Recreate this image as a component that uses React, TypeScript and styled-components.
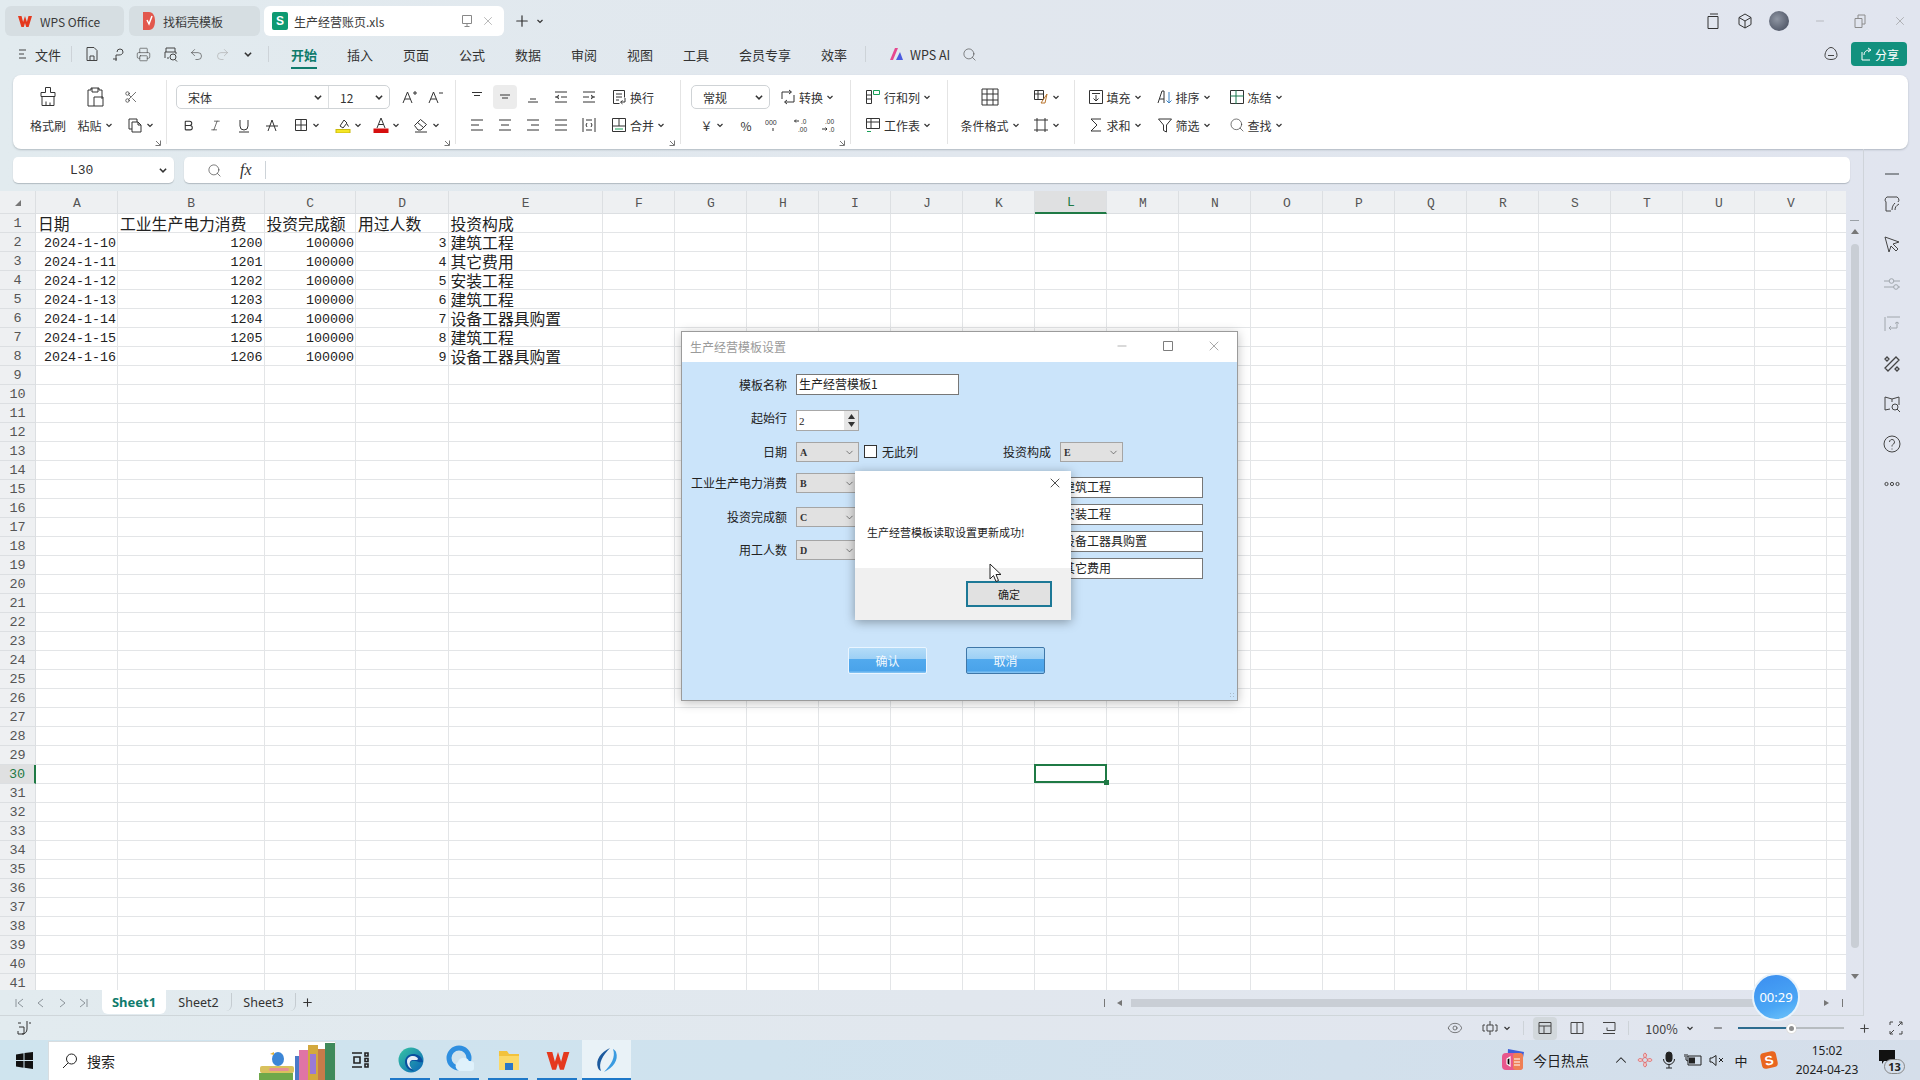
import React from "react";
import styled, { createGlobalStyle } from "styled-components";
import {
  Bold, ChevronDown, ChevronUp, Eye, Italic, Minus, Plus, Printer, Redo2, Scissors, Search, Undo2, X,
} from "lucide-react";

const UI = `"Noto Sans CJK SC", "Noto Sans", sans-serif`;
const MONO = `"Liberation Mono", "Noto Sans CJK SC", monospace`;

const Global = createGlobalStyle`
  html, body { margin: 0; padding: 0; overflow: hidden; }
  * { box-sizing: border-box; }
`;

const Svg = ({ w = 16, h = 16, vb, color, sw = 1, children }: { w?: number; h?: number; vb?: string; color?: string; sw?: number; children: React.ReactNode }) => (
  <svg width={w} height={h} viewBox={vb || `0 0 ${w} ${h}`} fill="none" stroke={color || "currentColor"} strokeWidth={sw} style={{ flex: "none", display: "block" }}>
    {children}
  </svg>
);

const Chev = ({ size = 8 }: { size?: number }) => (
  <svg width={size} height={size} viewBox="0 0 8 8" fill="none" stroke="#333" strokeWidth="1.2" style={{ flex: "none" }}>
    <path d="M1.5 3l2.5 2.5L6.5 3" />
  </svg>
);

const Page = styled.div`
  position: relative;
  width: 1920px;
  height: 1080px;
  overflow: hidden;
  display: flex;
  flex-direction: column;
  font-family: ${UI};
  color: #333;
  background: linear-gradient(90deg, #e2ebef 0%, #e1e7ee 50%, #e1e5ef 100%);
`;

/* title tabs */
const TabBar = styled.div`
  height: 37px;
  padding: 6px 0 0 5px;
  display: flex;
  align-items: flex-start;
  flex: none;
`;
const DocTab = styled.div<{ $w: number; $active?: boolean; $gap?: number; $pl?: number }>`
  width: ${(p) => p.$w}px;
  height: 30px;
  margin-right: ${(p) => p.$gap ?? 5}px;
  border-radius: 6px;
  background: ${(p) => (p.$active ? "#ffffff" : "#d6dee2")};
  display: flex;
  align-items: center;
  padding-left: ${(p) => p.$pl ?? 12}px;
  gap: 7px;
  font-size: 12px;
  color: #3a3a3a;
`;
const SheetLogo = styled.span`
  width: 16px;
  height: 18px;
  margin-right: -1px;
  border-radius: 2px;
  background: #0d9a72;
  color: #fff;
  font: bold 12px "Liberation Sans", sans-serif;
  display: flex;
  align-items: center;
  justify-content: center;
`;
const TabEnd = styled.span`
  margin-left: auto;
  margin-right: 9px;
  display: flex;
  align-items: center;
  gap: 7px;
  color: #888;
`;
const NewTab = styled.div`
  height: 30px;
  display: flex;
  align-items: center;
  gap: 5px;
  margin-left: 4px;
  color: #333;
`;
const WinControls = styled.div`
  margin-left: auto;
  height: 30px;
  display: flex;
  align-items: center;
  color: #333;
`;
const WinSlot = styled.span<{ $w: number; $dim?: boolean }>`
  width: ${(p) => p.$w}px;
  display: flex;
  justify-content: center;
  color: ${(p) => (p.$dim ? "#8c8c8c" : "#333")};
`;
const Avatar = styled.span`
  width: 20px;
  height: 20px;
  border-radius: 50%;
  background: radial-gradient(circle at 40% 40%, #8f96a3, #575e6e 70%);
`;

/* menu row */
const MenuRow = styled.div`
  height: 38px;
  display: flex;
  align-items: center;
  padding: 0 13px 4px 16px;
  font-size: 13px;
  flex: none;
`;
const MenuIcon = styled.span<{ $w: number; $ml?: string; $dim?: boolean }>`
  width: ${(p) => p.$w}px;
  margin-left: ${(p) => p.$ml ?? "0"};
  display: flex;
  justify-content: center;
  align-items: center;
  color: ${(p) => (p.$dim ? "#aaa" : "#444")};
`;
const FileLabel = styled.span`
  margin: 0 10px 0 5px;
`;
const VLine = styled.span<{ $h?: number; $ml?: number; $mr?: number }>`
  width: 1px;
  height: ${(p) => p.$h ?? 16}px;
  margin: 0 ${(p) => p.$mr ?? 0}px 0 ${(p) => p.$ml ?? 0}px;
  background: #cdd3d8;
  flex: none;
`;
const MenuTab = styled.span<{ $w?: number; $active?: boolean }>`
  width: ${(p) => p.$w ?? 56}px;
  height: 34px;
  display: flex;
  align-items: center;
  justify-content: center;
  position: relative;
  color: ${(p) => (p.$active ? "#0f7b6c" : "#333")};
  font-weight: ${(p) => (p.$active ? 700 : 400)};
  &::after {
    content: "";
    display: ${(p) => (p.$active ? "block" : "none")};
    position: absolute;
    bottom: 2px;
    left: 15px;
    width: 26px;
    height: 2px;
    background: #0f7b6c;
  }
`;
const AiLabel = styled.span`
  font-size: 12.5px;
  margin-left: 5px;
`;
const ShareBtn = styled.span`
  margin-left: 12px;
  width: 56px;
  height: 24px;
  border-radius: 4px;
  background: #12917e;
  color: #fff;
  font-size: 12px;
  display: flex;
  align-items: center;
  justify-content: center;
  gap: 2px;
`;

/* ribbon */
const Ribbon = styled.div`
  margin: 0 12px 0 13px;
  height: 74px;
  flex: none;
  display: flex;
  background: #fff;
  border-radius: 8px;
  box-shadow: 0 1px 2px rgba(90, 100, 110, 0.35);
  font-size: 12px;
`;
const Group = styled.div<{ $w: number; $pl?: number; $last?: boolean }>`
  position: relative;
  width: ${(p) => p.$w}px;
  flex: none;
  padding: 10px 0 0 ${(p) => p.$pl ?? 0}px;
  display: flex;
  flex-direction: column;
  gap: 4px;
  &::after {
    content: "";
    display: ${(p) => (p.$last ? "none" : "block")};
    position: absolute;
    right: 0;
    top: 5px;
    bottom: 5px;
    width: 1px;
    background: #e4e4e4;
  }
`;
const RRow = styled.div`
  height: 24px;
  display: flex;
  align-items: center;
`;
const Slot = styled.span<{ $w: number; $start?: number }>`
  width: ${(p) => p.$w}px;
  height: 24px;
  flex: none;
  display: flex;
  align-items: center;
  justify-content: ${(p) => (p.$start !== undefined ? "flex-start" : "center")};
  padding-left: ${(p) => p.$start ?? 0}px;
  gap: 3px;
  white-space: nowrap;
  color: #333;
`;
const ActiveBox = styled.span`
  width: 24px;
  height: 24px;
  background: #ececec;
  border-radius: 4px;
  display: flex;
  align-items: center;
  justify-content: center;
`;
const Combo = styled.div<{ $w: number }>`
  width: ${(p) => p.$w}px;
  height: 24px;
  flex: none;
  border: 1px solid #cfd3d6;
  border-radius: 5px;
  display: flex;
  align-items: center;
`;
const ComboPart = styled.span<{ $w: number; $line?: boolean }>`
  width: ${(p) => p.$w}px;
  height: 22px;
  display: flex;
  align-items: center;
  justify-content: space-between;
  padding: 0 5px 0 11px;
  border-right: ${(p) => (p.$line ? "1px solid #dcdfe1" : "none")};
`;
const Corner = styled.span`
  position: absolute;
  right: 6px;
  bottom: 3px;
  color: #777;
`;

/* formula */
const Workspace = styled.div`
  flex: 1;
  min-height: 0;
  display: flex;
`;
const Center = styled.div`
  width: 1863px;
  display: flex;
  flex-direction: column;
  padding-top: 8px;
`;
const Side = styled.div`
  width: 57px;
  border-left: 1px solid #cfd4da;
  display: flex;
  flex-direction: column;
  align-items: center;
  padding-top: 17px;
  gap: 22px;
  color: #444;
`;
const SideDash = styled.span`
  width: 14px;
  height: 1.5px;
  margin: 7px 0 -2px;
  background: #8d9298;
`;
const FormulaRow = styled.div`
  height: 26px;
  flex: none;
  display: flex;
  gap: 10px;
  padding: 0 13px;
`;
const NameBox = styled.div`
  width: 161px;
  background: #fff;
  border-radius: 5px;
  box-shadow: 0 1px 1px rgba(90, 100, 110, 0.35);
  font: 13px ${MONO};
  display: flex;
  align-items: center;
  padding: 0 6px 0 57px;
  justify-content: space-between;
`;
const FormulaInput = styled.div`
  flex: 1;
  background: #fff;
  border-radius: 5px;
  box-shadow: 0 1px 1px rgba(90, 100, 110, 0.35);
  display: flex;
  align-items: center;
  padding-left: 23px;
  gap: 14px;
`;
const Fx = styled.span`
  width: 18px;
  margin: 0 -7px 0 4px;
  font: italic 16px "Liberation Serif", serif;
  color: #333;
`;

/* sheet */
const SheetArea = styled.div`
  flex: 1;
  min-height: 0;
  margin-top: 8px;
  display: flex;
`;
const GridClip = styled.div`
  width: 1846px;
  overflow: hidden;
  background: #fff;
`;
const Grid = styled.div`
  display: grid;
  grid-template-columns: 36px 82px 146.5px 91.5px 92.5px 154.5px repeat(18, 72px);
  grid-template-rows: 23px repeat(41, 19px);
  width: max-content;
`;
const Corner0 = styled.div`
  background: #eef0f2;
  border-right: 1px solid #dcdfe2;
  border-bottom: 1px solid #dcdfe2;
  display: flex;
  align-items: center;
  justify-content: center;
  padding-top: 2px;
  color: #777;
`;
const ColHead = styled.div<{ $on?: boolean }>`
  background: ${(p) => (p.$on ? "#dfe0e1" : "#eef0f2")};
  border-right: 1px solid #dcdfe2;
  border-bottom: ${(p) => (p.$on ? "2px solid #1f7a45" : "1px solid #dcdfe2")};
  color: ${(p) => (p.$on ? "#1f7a45" : "#555")};
  font: 13px ${MONO};
  display: flex;
  align-items: center;
  justify-content: center;
  padding: 2px 0 0 1px;
`;
const RowHead = styled.div<{ $on?: boolean }>`
  background: ${(p) => (p.$on ? "#dfe0e1" : "#eef0f2")};
  border-right: ${(p) => (p.$on ? "2px solid #1f7a45" : "1px solid #dcdfe2")};
  border-bottom: 1px solid #dcdfe2;
  color: ${(p) => (p.$on ? "#1f7a45" : "#555")};
  font: 13.5px/16px ${MONO};
  display: flex;
  align-items: center;
  justify-content: center;
  padding-top: 2px;
`;
const Cell = styled.div<{ $num?: boolean; $sel?: boolean }>`
  position: relative;
  border-right: 1px solid #e3e5e7;
  border-bottom: 1px solid #e3e5e7;
  padding: ${(p) => (p.$num ? "3px 1px 0 1px" : "1px 1px 0 2px")};
  white-space: nowrap;
  color: #222;
  text-align: ${(p) => (p.$num ? "right" : "left")};
  font: ${(p) => (p.$num ? `13.33px/15px ${MONO}` : `15.8px/17px ${UI}`)};
  &::after {
    content: "";
    display: ${(p) => (p.$sel ? "block" : "none")};
    position: absolute;
    inset: -1px -1px 0 -1px;
    border: 2px solid #1f7a45;
  }
  &::before {
    content: "";
    display: ${(p) => (p.$sel ? "block" : "none")};
    position: absolute;
    right: -3px;
    bottom: -2px;
    width: 5px;
    height: 5px;
    background: #1f7a45;
    z-index: 1;
  }
`;
const VScroll = styled.div`
  width: 17px;
  display: flex;
  flex-direction: column;
  align-items: center;
  color: #777;
  padding-top: 8px;
`;
const ScrollDash = styled.span`
  width: 9px;
  height: 1px;
  background: #9aa0a6;
  margin: 21px 0 8px;
`;
const ScrollThumb = styled.span`
  width: 8px;
  height: 704px;
  margin-top: 10px;
  border-radius: 4px;
  background: #c9ced5;
`;
const ArrowUp = styled.span`
  width: 0;
  height: 0;
  border: 4px solid transparent;
  border-top: 0;
  border-bottom: 5px solid #777;
`;
const ArrowDown = styled.span`
  width: 0;
  height: 0;
  margin-top: 26px;
  border: 4px solid transparent;
  border-bottom: 0;
  border-top: 5px solid #777;
`;

/* sheet tabs */
const TabsRow = styled.div`
  height: 26px;
  flex: none;
  border-bottom: 1px solid #cfd6da;
  display: flex;
  align-items: flex-start;
  font-size: 12px;
`;
const NavSet = styled.div`
  width: 102px;
  height: 25px;
  padding-left: 14px;
  display: flex;
  align-items: center;
  gap: 9px;
  color: #8c949a;
`;
const SheetTab = styled.span<{ $w: number; $active?: boolean }>`
  width: ${(p) => p.$w}px;
  height: ${(p) => (p.$active ? 24 : 18)}px;
  margin-top: ${(p) => (p.$active ? 0 : 3)}px;
  display: flex;
  align-items: center;
  justify-content: center;
  background: ${(p) => (p.$active ? "#fff" : "transparent")};
  border-radius: 0 0 6px 6px;
  border-right: ${(p) => (p.$active ? "none" : "1px solid #c5ccd1")};
  color: ${(p) => (p.$active ? "#0f7b6c" : "#333")};
  font: ${(p) => (p.$active ? "bold 13px" : "12.5px")} "Noto Sans", sans-serif;
`;
const AddSheet = styled.span`
  margin: 5px 0 0 5px;
  color: #333;
`;
const HScroll = styled.div`
  margin-left: auto;
  height: 25px;
  display: flex;
  align-items: center;
  color: #777;
`;
const ArrowSide = styled.span<{ $left?: boolean }>`
  width: 0;
  height: 0;
  border: 3.5px solid transparent;
  ${(p) => (p.$left ? "border-left: 0; border-right: 5px solid #777;" : "border-right: 0; border-left: 5px solid #777;")}
`;
const HTrack = styled.span`
  width: 637px;
  height: 8px;
  margin: 0 56px 0 9px;
  background: #c9ced5;
  border-radius: 0 4px 4px 0;
`;
const HEnd = styled.span<{ $ml: number; $mr: number }>`
  width: 1px;
  height: 8px;
  margin: 0 ${(p) => p.$mr}px 0 ${(p) => p.$ml}px;
  background: #777;
`;

/* status */
const StatusBar = styled.div`
  height: 24px;
  flex: none;
  padding: 0 12px 0 16px;
  display: flex;
  align-items: center;
  font-size: 12.5px;
`;
const StatusSlot = styled.span<{ $w: number; $ml?: string; $pl?: number; $gap?: number }>`
  width: ${(p) => p.$w}px;
  height: 24px;
  flex: none;
  margin-left: ${(p) => p.$ml ?? "0"};
  padding-left: ${(p) => p.$pl ?? 0}px;
  display: flex;
  align-items: center;
  justify-content: center;
  gap: ${(p) => p.$gap ?? 5}px;
  color: #444;
`;
const ViewBox = styled.span<{ $on?: boolean }>`
  width: 24px;
  height: 23px;
  border-radius: 4px;
  background: ${(p) => (p.$on ? "#d2d8dc" : "transparent")};
  display: flex;
  align-items: center;
  justify-content: center;
`;
const ZoomSlider = styled.span`
  width: 106px;
  margin-left: 9px;
  display: flex;
  align-items: center;
`;
const ZoomFill = styled.span`
  width: 49px;
  height: 2px;
  background: #2d6c8f;
`;
const ZoomThumb = styled.span`
  width: 9px;
  height: 9px;
  border-radius: 50%;
  background: #8d8d8d;
  border: 2px solid #fff;
  box-shadow: 0 0 0 1px #e0e0e0;
  flex: none;
`;
const ZoomRest = styled.span`
  flex: 1;
  height: 2px;
  background: #b7bcc0;
`;

/* taskbar */
const Taskbar = styled.div`
  height: 40px;
  flex: none;
  display: flex;
  align-items: center;
  background: linear-gradient(90deg, #cfe4ee 0%, #cfe2ee 40%, #d5deea 100%);
  color: #222;
`;
const StartSlot = styled.span`
  width: 48px;
  display: flex;
  justify-content: center;
`;
const SearchBox = styled.div`
  width: 288px;
  height: 39px;
  margin-top: 1px;
  background: #fff;
  border: 1px solid #d8dde0;
  border-bottom: 0;
  display: flex;
  align-items: center;
  padding-left: 12px;
  gap: 8px;
  font-size: 14px;
`;
const BooksWrap = styled.span`
  margin-left: auto;
  display: flex;
  align-self: flex-end;
`;
const TaskSlot = styled.span<{ $w?: number; $run?: boolean; $on?: boolean; $ml?: number }>`
  position: relative;
  width: ${(p) => p.$w ?? 49}px;
  height: 40px;
  flex: none;
  margin-left: ${(p) => p.$ml ?? 0}px;
  display: flex;
  align-items: center;
  justify-content: center;
  background: ${(p) => (p.$on ? "rgba(255,255,255,0.55)" : "transparent")};
  &::after {
    content: "";
    display: ${(p) => (p.$run ? "block" : "none")};
    position: absolute;
    bottom: 0;
    left: ${(p) => (p.$on ? 0 : 4)}px;
    right: ${(p) => (p.$on ? 0 : 5)}px;
    height: 2px;
    background: #1f78c8;
  }
`;
const TrayArea = styled.div`
  margin-left: auto;
  padding-right: 6px;
  display: flex;
  align-items: center;
`;
const NewsText = styled.span`
  font-size: 14px;
  margin: 0 20px 0 8px;
`;
const TraySlot = styled.span<{ $gap?: number }>`
  width: 24px;
  margin-left: ${(p) => p.$gap ?? 0}px;
  display: flex;
  justify-content: center;
  align-items: center;
  color: #222;
`;
const ImeText = styled.span`
  font-size: 13px;
`;
const SogouS = styled.span`
  width: 16px;
  height: 16px;
  border-radius: 4px;
  background: #e9661f;
  color: #fff;
  font: bold 13px "Liberation Sans", sans-serif;
  display: flex;
  align-items: center;
  justify-content: center;
  transform: rotate(-12deg);
`;
const Clock = styled.div`
  width: 66px;
  margin-left: 13px;
  text-align: center;
  font: 12px/19px "Noto Sans", sans-serif;
  color: #222;
`;
const NotifySlot = styled.span`
  position: relative;
  width: 54px;
  height: 40px;
  display: flex;
  justify-content: center;
  padding-top: 10px;
`;
const NotifyBadge = styled.span`
  position: absolute;
  left: 24px;
  top: 19px;
  width: 21px;
  height: 15px;
  border-radius: 8px;
  border: 1px solid #888;
  background: #d5deea;
  font: bold 11px/13px "Noto Sans", sans-serif;
  text-align: center;
  color: #222;
`;

/* dialog */
const Dialog = styled.div`
  position: absolute;
  left: 681px;
  top: 331px;
  width: 557px;
  height: 370px;
  border: 1px solid #9b9b9b;
  box-shadow: 0 2px 10px rgba(0, 0, 0, 0.25);
  display: flex;
  flex-direction: column;
`;
const DlgTitle = styled.div`
  height: 30px;
  flex: none;
  background: #fff;
  display: flex;
  align-items: center;
  padding: 0 0 2px 8px;
  font-size: 12px;
  color: #9a9a9a;
`;
const DlgControls = styled.span`
  margin-left: auto;
  display: flex;
  align-items: center;
  color: #7d7d7d;
`;
const DlgControl = styled.span`
  width: 46px;
  display: flex;
  justify-content: center;
`;
const DlgBody = styled.div`
  position: relative;
  flex: 1;
  background: #cbe4fa;
  padding-top: 12px;
  font-size: 12px;
  color: #222;
`;
const FormRow = styled.div<{ $h: number }>`
  height: ${(p) => p.$h}px;
  display: flex;
  align-items: flex-start;
`;
const FieldLabel = styled.span<{ $w?: number; $dy?: number }>`
  width: ${(p) => p.$w ?? 105}px;
  flex: none;
  height: 20px;
  margin-top: ${(p) => p.$dy ?? 0}px;
  line-height: 20px;
  text-align: right;
  margin-right: 9px;
  white-space: nowrap;
`;
const TextBox = styled.div<{ $w: number }>`
  width: ${(p) => p.$w}px;
  height: 21px;
  background: #fff;
  border: 1px solid #777;
  padding: 0 2px;
  font-size: 12px;
  line-height: 17px;
  white-space: nowrap;
  overflow: hidden;
`;
const SpinBox = styled.div`
  width: 63px;
  height: 21px;
  background: #fff;
  border: 1px solid #a8a8a8;
  display: flex;
  align-items: center;
  justify-content: space-between;
  padding-left: 2px;
  font: 11px "Liberation Serif", serif;
`;
const SpinBtns = styled.span`
  width: 14px;
  height: 19px;
  background: #e6e6e6;
  display: flex;
  flex-direction: column;
  align-items: center;
  justify-content: space-around;
  padding: 2px 0;
`;
const Drop = styled.div`
  width: 63px;
  height: 20px;
  background: #e1e1e1;
  border: 1px solid #a5a5a5;
  display: flex;
  align-items: center;
  justify-content: space-between;
  padding: 0 3px 0 3px;
  font: bold 10px "Liberation Serif", serif;
  color: #333;
`;
const Check = styled.span`
  width: 13px;
  height: 13px;
  margin: 3px 5px 0 5px;
  background: #fff;
  border: 1px solid #333;
  flex: none;
`;
const CheckText = styled.span`
  line-height: 20px;
`;
const Columns = styled.div`
  display: flex;
`;
const ColLeft = styled.div`
  width: 320px;
`;
const ColRight = styled.div`
  flex: 1;
`;
const OptionStack = styled.div`
  margin-top: 15px;
  padding-right: 34px;
  display: flex;
  flex-direction: column;
  align-items: flex-end;
  gap: 6px;
`;
const DlgButtons = styled.div`
  margin: 68px 0 0 166px;
  display: flex;
  gap: 39px;
`;
const BlueBtn = styled.div<{ $light?: boolean }>`
  width: 79px;
  height: 27px;
  border: 1px solid ${(p) => (p.$light ? "#eaf5ff" : "#3f77a8")};
  border-radius: 2px;
  background: linear-gradient(180deg, #b4dcf8 0%, #9dd0f5 42%, #52aaee 44%, #4aa3ea 90%, #8cc8f4 100%);
  color: #f2f8fd;
  font-size: 12px;
  display: flex;
  align-items: center;
  justify-content: center;
`;
const Grip = styled.span`
  position: absolute;
  right: 1px;
  bottom: 1px;
  width: 7px;
  height: 7px;
  opacity: 0.7;
  background: radial-gradient(circle, #9aa9b6 0.8px, transparent 1px) 0 0 / 3px 3px;
`;
const MsgBox = styled.div`
  position: absolute;
  left: 173px;
  top: 109px;
  width: 216px;
  height: 149px;
  background: #fff;
  box-shadow: 0 2px 10px rgba(0, 0, 0, 0.35);
  display: flex;
  flex-direction: column;
`;
const MsgClose = styled.span`
  position: absolute;
  right: 8px;
  top: 4px;
  color: #222;
`;
const MsgText = styled.div`
  height: 97px;
  flex: none;
  padding: 53px 0 0 12px;
  font-size: 11px;
  line-height: 16px;
  white-space: nowrap;
`;
const MsgFoot = styled.div`
  flex: 1;
  background: #f0f0f0;
  display: flex;
  justify-content: flex-end;
  padding: 13px 19px 0 0;
`;
const MsgOk = styled.div`
  width: 86px;
  height: 26px;
  border: 2px solid #1c7896;
  background: #e1e1e1;
  font-size: 11px;
  display: flex;
  align-items: center;
  justify-content: center;
`;
const Pointer = styled.span`
  position: absolute;
  left: 134px;
  top: 92px;
`;
const Timer = styled.div`
  position: absolute;
  left: 1752px;
  top: 973px;
  width: 48px;
  height: 48px;
  border-radius: 50%;
  border: 2px solid #e9f3fb;
  background: linear-gradient(160deg, #3b8ef0 0%, #4aa6f5 65%, #6fc5fa 100%);
  color: #fff;
  font: 13px "Noto Sans", sans-serif;
  display: flex;
  align-items: center;
  justify-content: center;
`;

const COLS = "ABCDEFGHIJKLMNOPQRSTUVW".split("");
const ROWS = [
  ["日期", "工业生产电力消费", "投资完成额", "用过人数", "投资构成"],
  ["2024-1-10", "1200", "100000", "3", "建筑工程"],
  ["2024-1-11", "1201", "100000", "4", "其它费用"],
  ["2024-1-12", "1202", "100000", "5", "安装工程"],
  ["2024-1-13", "1203", "100000", "6", "建筑工程"],
  ["2024-1-14", "1204", "100000", "7", "设备工器具购置"],
  ["2024-1-15", "1205", "100000", "8", "建筑工程"],
  ["2024-1-16", "1206", "100000", "9", "设备工器具购置"],
];

const WpsW = ({ s = 16 }: { s?: number }) => (
  <svg width={s} height={s} viewBox="0 0 16 16" style={{ flex: "none" }}>
    <path d="M1 3h3.5l1.6 6L8 3l1.9 6 1.6-6H15l-3.4 11H9.2L8 10l-1.2 4H4.4z" fill="#e5391e" />
  </svg>
);

const CornerMark = () => (
  <Corner><Svg w={6} h={6}><path d="M5.5 0.5v5h-5M1 1l4 4" /></Svg></Corner>
);

const SheetGrid = () => {
  const cells: React.ReactNode[] = [];
  cells.push(
    <Corner0 key="c">
      <svg width="8" height="8" viewBox="0 0 8 8"><path d="M7 1v6H1z" fill="#777" /></svg>
    </Corner0>
  );
  COLS.forEach((c) => cells.push(<ColHead key={c} $on={c === "L"}>{c === "W" ? "" : c}</ColHead>));
  for (let r = 1; r <= 41; r++) {
    cells.push(<RowHead key={"r" + r} $on={r === 30}>{r}</RowHead>);
    COLS.forEach((c, i) => {
      const v = ROWS[r - 1]?.[i];
      const num = !!v && r > 1 && i < 4;
      cells.push(
        <Cell key={c + r} $num={num} $sel={c === "L" && r === 30}>
          {v}
        </Cell>
      );
    });
  }
  return <Grid>{cells}</Grid>;
};

const Ribbons = () => (
  <Ribbon>
    <Group $w={154} $pl={17}>
      <RRow>
        <Slot $w={36}>
          <Svg w={20} h={22}>
            <path d="M7.5 1.5h5v5h4.5v4H3v-4h4.5zM4 10.5v9h12v-9M8 19.5v-4M12 19.5v-3" />
          </Svg>
        </Slot>
        <Slot $w={58}>
          <Svg w={20} h={22}>
            <path d="M3 4h3V2h8v2h3v9M3 4v16h6M7 2v4h6V2M9 11h9v9H9z" />
          </Svg>
        </Slot>
        <Slot $w={14}><Scissors size={18} strokeWidth={1.2} /></Slot>
      </RRow>
      <RRow>
        <Slot $w={36}>格式刷</Slot>
        <Slot $w={58}>粘贴<Chev /></Slot>
        <Slot $w={33}>
          <Svg><path d="M2 2h8v3M2 2v10h3M5 5h6l3 3v7H5zM11 5v3h3" /></Svg>
          <Chev />
        </Slot>
      </RRow>
      <CornerMark />
    </Group>
    <Group $w={289} $pl={9}>
      <RRow>
        <Combo $w={214}>
          <ComboPart $w={152} $line>宋体<Chev size={10} /></ComboPart>
          <ComboPart $w={60}>12<Chev size={10} /></ComboPart>
        </Combo>
        <Slot $w={38}>
          <Svg><path d="M2 14L6.5 3l4.5 11M3.8 10h5.4M12 4h4M14 2v4" /></Svg>
        </Slot>
        <Slot $w={16}>
          <Svg><path d="M1 14L5.5 3 10 14M2.8 10h5.4M11 4h4" /></Svg>
        </Slot>
      </RRow>
      <RRow>
        <Slot $w={24}><Bold size={13} strokeWidth={2} /></Slot>
        <Slot $w={30}><Italic size={13} strokeWidth={1.3} /></Slot>
        <Slot $w={28}><Svg><path d="M4 3v6a4 4 0 008 0V3M3 15h10" /></Svg></Slot>
        <Slot $w={28}><Svg><path d="M4 14L8 3l4 11M2 9h12" /></Svg></Slot>
        <Slot $w={40}><Svg><path d="M2.5 2.5h11v11h-11zM2.5 8h11M8 2.5v11" /></Svg><Chev /></Slot>
        <Slot $w={44}>
          <Svg>
            <path d="M5 9l4-6 3 3-4 5zM12 7l1.5 2.5" />
            <rect x="1" y="12.5" width="14" height="3.5" fill="#f5e625" stroke="#c9b90f" />
          </Svg>
          <Chev />
        </Slot>
        <Slot $w={32}>
          <Svg>
            <path d="M4 11L8 1l4 10M5.5 7.5h5" />
            <rect x="1" y="12" width="14" height="4" fill="#d60f0f" stroke="#d60f0f" />
          </Svg>
          <Chev />
        </Slot>
        <Slot $w={48}>
          <Svg><path d="M1.5 8.5l6-6 6 5-5.5 5.5H5zM4.5 5.5l6 5M2 15h12" /></Svg>
          <Chev />
        </Slot>
      </RRow>
      <CornerMark />
    </Group>
    <Group $w={225} $pl={7}>
      <RRow>
        <Slot $w={28}><Svg><path d="M3 3.5h10M5 6.5h6" /></Svg></Slot>
        <Slot $w={28}><ActiveBox><Svg><path d="M3 6h10M5 9h6" /></Svg></ActiveBox></Slot>
        <Slot $w={28}><Svg><path d="M5 10h6M3 13h10" /></Svg></Slot>
        <Slot $w={28}><Svg><path d="M2 3h12M2 13h12M8 8h6M2 8h4M6 6L3.5 8 6 10" /></Svg></Slot>
        <Slot $w={28}><Svg><path d="M2 3h12M2 13h12M2 8h6M10 8h4M10 6l2.5 2-2.5 2" /></Svg></Slot>
        <Slot $w={70} $start={8}>
          <Svg><path d="M2.5 1.5h11v7M2.5 1.5v13h6M5 5h6M5 8h6M5 11h3M14 9v4h-4M11.5 11.5l-2 1.7 2 1.7" /></Svg>
          换行
        </Slot>
      </RRow>
      <RRow>
        <Slot $w={28}><Svg><path d="M2 3h12M2 8h8M2 13h12" /></Svg></Slot>
        <Slot $w={28}><Svg><path d="M2 3h12M4 8h8M2 13h12" /></Svg></Slot>
        <Slot $w={28}><Svg><path d="M2 3h12M6 8h8M2 13h12" /></Svg></Slot>
        <Slot $w={28}><Svg><path d="M2 3h12M2 8h12M2 13h12" /></Svg></Slot>
        <Slot $w={28}><Svg><path d="M2 1v14M14 1v14M5 3h6M5 13h6M6 6l-1 2 1 2M10 6l1 2-1 2" /></Svg></Slot>
        <Slot $w={70} $start={8}>
          <Svg><path d="M1.5 1.5h13v13h-13zM1.5 9h13M8 1.5V9" /><path d="M4 12h8" stroke="#18a058" /></Svg>
          合并<Chev />
        </Slot>
      </RRow>
      <CornerMark />
    </Group>
    <Group $w={170} $pl={10}>
      <RRow>
        <Combo $w={79}><ComboPart $w={77}>常规<Chev size={10} /></ComboPart></Combo>
        <Slot $w={78} $start={10}>
          <Svg><path d="M2 10V3h9M9 1l2.5 2L9 5M14 6v7H5M7 11l-2.5 2L7 15" /></Svg>
          转换<Chev />
        </Slot>
      </RRow>
      <RRow>
        <Slot $w={42}>￥<Chev /></Slot>
        <Slot $w={26}>%</Slot>
        <Slot $w={28}><Svg><text x="0" y="8" fontSize="7" fill="#333" stroke="none" fontFamily="Liberation Sans">000</text><path d="M8 11v3" /></Svg></Slot>
        <Slot $w={28}><Svg><text x="8" y="7" fontSize="6.5" fill="#333" stroke="none" fontFamily="Liberation Sans">.0</text><text x="5" y="15" fontSize="6.5" fill="#333" stroke="none" fontFamily="Liberation Sans">.00</text><path d="M6 4H1.5M3 2.5L1.5 4 3 5.5" /></Svg></Slot>
        <Slot $w={28}><Svg><text x="4" y="7" fontSize="6.5" fill="#333" stroke="none" fontFamily="Liberation Sans">.00</text><text x="8" y="15" fontSize="6.5" fill="#333" stroke="none" fontFamily="Liberation Sans">.0</text><path d="M1 12h5M4.5 10.5L6 12l-1.5 1.5" /></Svg></Slot>
      </RRow>
      <CornerMark />
    </Group>
    <Group $w={97} $pl={14}>
      <RRow>
        <Slot $w={80} $start={0}>
          <Svg><path d="M1.5 1.5h5v13h-5zM1.5 6h5M1.5 10h5" /><path d="M8.5 1.5h6v4h-6z" stroke="#18a058" /></Svg>
          行和列<Chev />
        </Slot>
      </RRow>
      <RRow>
        <Slot $w={80} $start={0}>
          <Svg><path d="M1.5 1.5h13v10h-13zM1.5 5h13M6 1.5v10" /><path d="M2 14.5h4" stroke="#18a058" /></Svg>
          工作表<Chev />
        </Slot>
      </RRow>
    </Group>
    <Group $w={126.5} $pl={6}>
      <RRow>
        <Slot $w={72}>
          <Svg w={20} h={20}><path d="M2 2h16v16H2zM2 7h16M2 13h16M7 2v16M13 2v16" /></Svg>
        </Slot>
        <Slot $w={40}>
          <Svg><path d="M1.5 1.5h9v9h-9zM1.5 5h9M5 1.5v9" /><path d="M8 14l6-9-2 9z" stroke="#b9752e" /></Svg>
          <Chev />
        </Slot>
      </RRow>
      <RRow>
        <Slot $w={72}>条件格式<Chev /></Slot>
        <Slot $w={40}>
          <Svg><path d="M1 3h14M1 13h14M4 1v14M12 1v14" /></Svg>
          <Chev />
        </Slot>
      </RRow>
    </Group>
    <Group $w={300} $pl={13} $last>
      <RRow>
        <Slot $w={69} $start={0}>
          <Svg><path d="M1.5 1.5h13v13h-13zM4 4.5h8M8 6v6M5.5 9.5L8 12l2.5-2.5" /></Svg>
          填充<Chev />
        </Slot>
        <Slot $w={72} $start={0}>
          <Svg><path d="M1 14L5 2h2v12M2.5 10H7" /><path d="M12 3v11M9.5 11.5L12 14l2.5-2.5" stroke="#3b82c4" /></Svg>
          排序<Chev />
        </Slot>
        <Slot $w={70} $start={0}>
          <Svg><path d="M1.5 1.5h13v13h-13z" /><path d="M7 1v14M1 7h14" stroke="#18794e" /></Svg>
          冻结<Chev />
        </Slot>
      </RRow>
      <RRow>
        <Slot $w={69} $start={0}>
          <Svg><path d="M13 2H3l6 6-6 6h10" /></Svg>
          求和<Chev />
        </Slot>
        <Slot $w={72} $start={0}>
          <Svg><path d="M1.5 2h13l-5 6v7l-3-1.5V8z" /></Svg>
          筛选<Chev />
        </Slot>
        <Slot $w={70} $start={0}>
          <Search size={16} strokeWidth={1} />
          查找<Chev />
        </Slot>
      </RRow>
    </Group>
  </Ribbon>
);

const SidePanel = () => (
  <Side>
    <SideDash />
    <Svg w={18} h={18}><path d="M3 7a3 3 0 013-5h6a3 3 0 013 5M3 7v9h5M9 15c0-3 1-5 3-7M12 15c0-3 1-4 4-6" /></Svg>
    <Svg w={18} h={18}><path d="M2 2l14 5-6 2 5 5-2 2-5-5-2 6z" /></Svg>
    <Svg w={18} h={18} color="#a0a6ac"><path d="M1 6h5M11 6h6M1 12h10M15 12h2" /><circle cx="8.5" cy="6" r="2.3" /><circle cx="13" cy="12" r="2.3" /></Svg>
    <Svg w={18} h={18} color="#a0a6ac"><path d="M4 2h13M2 2v14M14 7v6H6M8 11l-2 2 2 2M14 7l-2 1.5M14 7l2 1.5" /></Svg>
    <Svg w={18} h={18} sw={1.3}><path d="M5 16L16 5l-3-3L2 13zM12 14l2 2 2-2-2-2zM2 4l2 2 2-2-2-2z" /></Svg>
    <Svg w={18} h={18}><path d="M2 2l7 2 7-2v8M2 2v13l5-1M9 4v3" /><circle cx="12" cy="12" r="3" /><path d="M14 14l3 3" /></Svg>
    <Svg w={18} h={18}><circle cx="9" cy="9" r="8" /><path d="M6.5 7a2.5 2.5 0 114 2c-1 .7-1.5 1-1.5 2.5M9 13.5v1" /></Svg>
    <Svg w={18} h={18}><circle cx="3.5" cy="9" r="1.6" /><circle cx="9" cy="9" r="1.6" /><circle cx="14.5" cy="9" r="1.6" /></Svg>
  </Side>
);

const TaskIcons = () => (
  <>
    <TaskSlot $w={47}>
      <Svg w={18} h={18} sw={1.6} color="#222"><path d="M1 2h10M1 16h10M3 6h6v6H3zM14 2h3v3h-3zM14 7.5h3v3h-3zM14 13h3v3h-3z" /></Svg>
    </TaskSlot>
    <TaskSlot $run $ml={3}>
      <svg width="26" height="26" viewBox="0 0 26 26">
        <defs>
          <linearGradient id="edge" x1="0" y1="0" x2="1" y2="1"><stop offset="0" stopColor="#37c6a2" /><stop offset="1" stopColor="#0a63b8" /></linearGradient>
        </defs>
        <circle cx="13" cy="13" r="12.5" fill="url(#edge)" />
        <path d="M25 15c-1-6-6-8-10-8-5 0-8 4-8 8 0 5 4 9 9 9-3-2-4-4-4-7 0-2 2-4 5-3 3 .5 5 2 8 1z" fill="#0a4f9e" />
        <path d="M9 14c0-3 3-5 6-5s5 2 5 3-2 1-4 1-3 0-4 2 0 5 2 7c-3-1-5-4-5-8z" fill="#fff" opacity="0.9" />
      </svg>
    </TaskSlot>
    <TaskSlot $run>
      <svg width="28" height="30" viewBox="0 0 28 30">
        <circle cx="13" cy="13" r="10" fill="none" stroke="#2e8fe0" strokeWidth="5" />
        <path d="M13 26a5 5 0 01-1-9 6 6 0 0111-1 5 5 0 012 10z" fill="#dff1fb" />
      </svg>
    </TaskSlot>
    <TaskSlot $run>
      <svg width="24" height="24" viewBox="0 0 24 24">
        <path d="M2 3h8l2 3h10v16H2z" fill="#f2c23c" />
        <path d="M2 8h20v14H2z" fill="#fbd968" />
        <path d="M8 15h8v7H8z" fill="#2b78c8" />
      </svg>
    </TaskSlot>
    <TaskSlot $run><WpsW s={26} /></TaskSlot>
    <TaskSlot $w={49} $run $on>
      <svg width="26" height="28" viewBox="0 0 26 28" fill="none">
        <path d="M16 2C7 6 1 14 4 22c.5 1.5 2 2.5 3 3C4 17 9 9 16 2z" fill="#1c5a9e" />
        <path d="M10 26c9-4 15-12 12-20-.5-1.5-2-2.5-3-3 3 8-2 16-9 23z" fill="#3b9be0" />
      </svg>
    </TaskSlot>
  </>
);

const Books = () => (
  <svg width="78" height="38" viewBox="0 0 78 38">
    <rect x="2" y="31" width="34" height="7" fill="#6fa84a" />
    <rect x="3" y="24" width="34" height="7" rx="2" fill="#d9c15d" />
    <rect x="12" y="26" width="20" height="3" rx="1.5" fill="#e68f94" />
    <ellipse cx="21" cy="17" rx="6" ry="7" fill="#3c86d6" />
    <path d="M17 10l-4 2 4 1z" fill="#e0b23c" />
    <rect x="38" y="14" width="5" height="24" fill="#4a79c8" />
    <rect x="42" y="8" width="9" height="30" fill="#e074a6" />
    <rect x="51" y="3" width="10" height="35" fill="#d3a93e" />
    <rect x="53" y="12" width="6" height="20" fill="#9a7ad6" />
    <rect x="61" y="7" width="7" height="31" fill="#c77b4a" />
    <rect x="68" y="1" width="10" height="37" fill="#3f8a5b" />
  </svg>
);

const DropArrow = () => <ChevronDown size={11} strokeWidth={1.3} />;

export default function App() {
  return (
    <Page>
      <Global />
      <TabBar>
        <DocTab $w={119}><WpsW />WPS Office</DocTab>
        <DocTab $w={131} $gap={4} $pl={13}>
          <svg width="14" height="20" viewBox="0 0 14 20" style={{ flex: "none" }}>
            <path d="M1 1h6c4 0 6 4 6 9s-2 9-6 9H1z" fill="#e2574c" />
            <path d="M5 9l2 4 3-8" stroke="#fff" strokeWidth="1.5" fill="none" />
          </svg>
          找稻壳模板
        </DocTab>
        <DocTab $w={240} $active $pl={8}>
          <SheetLogo>S</SheetLogo>
          生产经营账页.xls
          <TabEnd>
            <Svg w={14} h={14}><path d="M2.5 1.5h9v8h-9zM7 9.5v3M4.5 12.5h5" /></Svg>
            <X size={14} strokeWidth={1} />
          </TabEnd>
        </DocTab>
        <NewTab>
          <Plus size={18} strokeWidth={1.6} />
          <Chev />
        </NewTab>
        <WinControls>
          <WinSlot $w={38}><Svg w={14} h={16}><path d="M2 3.5h10v12H2zM4 1h8" /></Svg></WinSlot>
          <WinSlot $w={26}><Svg><path d="M8 1l6 3.5v7L8 15l-6-3.5v-7zM2 4.5L8 8l6-3.5M8 8v7" /></Svg></WinSlot>
          <WinSlot $w={42}><Avatar /></WinSlot>
          <WinSlot $w={40} $dim><Minus size={12} strokeWidth={1} /></WinSlot>
          <WinSlot $w={40} $dim><Svg w={14} h={14}><path d="M2 4.5h7v9H2zM5 4.5V1h7v9H9" /></Svg></WinSlot>
          <WinSlot $w={40} $dim><X size={14} strokeWidth={1} /></WinSlot>
        </WinControls>
      </TabBar>

      <MenuRow>
        <MenuIcon $w={14}><Svg w={10} h={12}><path d="M1 2h7M1 6h5M1 10h7" /></Svg></MenuIcon>
        <FileLabel>文件</FileLabel>
        <VLine />
        <MenuIcon $w={20} $ml="10px"><Svg><path d="M3 1.5h7l3 3v10H3zM6 10h4v4.5H6z" /></Svg></MenuIcon>
        <MenuIcon $w={26} $ml="3px"><Svg><path d="M7 6a3 3 0 116 0c0 2-2 3-4 3H6v6M3 13h4" /></Svg></MenuIcon>
        <MenuIcon $w={25}><Printer size={15} strokeWidth={1} /></MenuIcon>
        <MenuIcon $w={30}><Svg><path d="M3 6V2h9v4M2 12V6h11v2M4 12h2" /><circle cx="10" cy="11" r="3" /><path d="M12 13.5l2 2" /></Svg></MenuIcon>
        <MenuIcon $w={20}><Undo2 size={15} strokeWidth={1} /></MenuIcon>
        <MenuIcon $w={33} $dim><Redo2 size={15} strokeWidth={1} /></MenuIcon>
        <MenuIcon $w={18}><Chev size={10} /></MenuIcon>
        <VLine $ml={11} $mr={7} />
        <MenuTab $active>开始</MenuTab>
        <MenuTab>插入</MenuTab>
        <MenuTab>页面</MenuTab>
        <MenuTab>公式</MenuTab>
        <MenuTab>数据</MenuTab>
        <MenuTab>审阅</MenuTab>
        <MenuTab>视图</MenuTab>
        <MenuTab>工具</MenuTab>
        <MenuTab $w={82}>会员专享</MenuTab>
        <MenuTab>效率</MenuTab>
        <VLine $ml={3} $mr={23} />
        <svg width="16" height="14" viewBox="0 0 16 14" style={{ flex: "none" }}>
          <path d="M1 13L6 1h3L4 13z" fill="#e5488f" />
          <path d="M7 13l4-8 3 8z" fill="#4a5be0" />
        </svg>
        <AiLabel>WPS AI</AiLabel>
        <MenuIcon $w={20} $ml="9px"><Search size={15} strokeWidth={1} /></MenuIcon>
        <MenuIcon $w={16} $ml="auto">
          <Svg><path d="M8 1.5c3 0 6 4 6 8 0 3-3 4-6 4s-6-1-6-4c0-4 3-8 6-8zM5 9.5h6" /></Svg>
        </MenuIcon>
        <ShareBtn>
          <Svg w={14} h={16} color="#fff"><path d="M3 6v8h8M5 9c0-3 2-5 6-5M9 2l3 2-3 2" /></Svg>
          分享
        </ShareBtn>
      </MenuRow>

      <Ribbons />

      <Workspace>
        <Center>
          <FormulaRow>
            <NameBox>L30<Chev size={10} /></NameBox>
            <FormulaInput>
              <Search size={15} strokeWidth={1} />
              <Fx>fx</Fx>
              <VLine $h={18} />
            </FormulaInput>
          </FormulaRow>
          <SheetArea>
            <GridClip><SheetGrid /></GridClip>
            <VScroll>
              <ScrollDash />
              <ArrowUp />
              <ScrollThumb />
              <ArrowDown />
            </VScroll>
          </SheetArea>
          <TabsRow>
            <NavSet>
              <Svg w={12} h={12}><path d="M2 2v8M9 2L4 6l5 4" /></Svg>
              <Svg w={12} h={12}><path d="M8 2L3 6l5 4" /></Svg>
              <Svg w={12} h={12}><path d="M4 2l5 4-5 4" /></Svg>
              <Svg w={12} h={12}><path d="M10 2v8M3 2l5 4-5 4" /></Svg>
            </NavSet>
            <SheetTab $w={64} $active>Sheet1</SheetTab>
            <SheetTab $w={66}>Sheet2</SheetTab>
            <SheetTab $w={64}>Sheet3</SheetTab>
            <AddSheet><Plus size={13} strokeWidth={2} /></AddSheet>
            <HScroll>
              <HEnd $ml={0} $mr={12} />
              <ArrowSide $left />
              <HTrack />
              <ArrowSide />
              <HEnd $ml={13} $mr={20} />
            </HScroll>
          </TabsRow>
        </Center>
        <SidePanel />
      </Workspace>

      <StatusBar>
        <Svg w={16} h={16}><path d="M3 7h5v7H2v-3M11 1v8c0 3-2 5-5 5M5 3H2M13 3h2" /></Svg>
        <StatusSlot $w={30} $ml="auto"><Eye size={16} strokeWidth={1} /></StatusSlot>
        <StatusSlot $w={53}>
          <Svg><path d="M5 5h6v6H5zM8 1v4M8 11v4M1 5h2M1 11h2M13 5h2M13 11h2M1 5v6M15 5v6" /></Svg>
          <Chev />
        </StatusSlot>
        <VLine $h={14} />
        <StatusSlot $w={37} $pl={5}>
          <ViewBox $on><Svg><path d="M2 2.5h12v11H2zM2 6h12M7 6v7.5" /></Svg></ViewBox>
        </StatusSlot>
        <StatusSlot $w={32}><Svg><path d="M2 2.5h12v11H2zM8 2.5v11" /></Svg></StatusSlot>
        <StatusSlot $w={32}><Svg><path d="M2 2.5h12v8H6v-3M2 13.5h12" /></Svg></StatusSlot>
        <VLine $h={14} $ml={3} $mr={3} />
        <StatusSlot $w={75} $gap={8}>
          100%
          <Chev />
        </StatusSlot>
        <StatusSlot $w={22}><Minus size={12} strokeWidth={2} /></StatusSlot>
        <ZoomSlider>
          <ZoomFill />
          <ZoomThumb />
          <ZoomRest />
        </ZoomSlider>
        <StatusSlot $w={40}><Plus size={13} strokeWidth={2} /></StatusSlot>
        <StatusSlot $w={24}>
          <Svg w={14} h={14}><path d="M1 4V1h3M10 1h3v3M13 10v3h-3M4 13H1v-3M1 13l4-4M9 5l4-4" /></Svg>
        </StatusSlot>
      </StatusBar>

      <Taskbar>
        <StartSlot>
          <svg width="17" height="17" viewBox="0 0 17 17">
            <path d="M0 2.5l7.5-1.2V8H0zM8.5 1.1L17 0v8H8.5zM0 9h7.5v6.7L0 14.5zM8.5 9H17v8l-8.5-1.200z" fill="#111" />
          </svg>
        </StartSlot>
        <SearchBox>
          <Svg w={18} h={18} color="#222"><circle cx="10.5" cy="7" r="5" /><path d="M7 11l-5 5" /></Svg>
          搜索
          <BooksWrap><Books /></BooksWrap>
        </SearchBox>
        <TaskIcons />
        <TrayArea>
          <svg width="24" height="24" viewBox="0 0 24 24" style={{ flex: "none" }}>
            <path d="M7 1l16 3-3 17H6z" fill="#3f5fd8" />
            <rect x="1" y="5" width="21" height="17" rx="4" fill="#e8578c" />
            <rect x="12" y="5" width="10" height="17" rx="3" fill="#ef7f55" />
            <path d="M6 11l3-2v9l-3-2zM13 11h6M13 14h6M13 17h6" stroke="#fff" strokeWidth="1.2" />
          </svg>
          <NewsText>今日热点</NewsText>
          <TraySlot><ChevronUp size={18} strokeWidth={1.4} /></TraySlot>
          <TraySlot>
            <svg width="16" height="16" viewBox="0 0 16 16" fill="none" stroke="#e06f73">
              <circle cx="8" cy="8" r="2.5" />
              <path d="M8 1c2 1 2 3 0 5-2-2-2-4 0-5zM15 8c-1 2-3 2-5 0 2-2 4-2 5 0zM8 15c-2-1-2-3 0-5 2 2 2 4 0 5zM1 8c1-2 3-2 5 0-2 2-4 2-5 0z" fill="#f1c9c5" />
            </svg>
          </TraySlot>
          <TraySlot>
            <Svg w={14} h={18} color="#222"><rect x="4" y="1" width="6" height="10" rx="3" fill="#222" /><path d="M1.5 8a5.5 5.5 0 0011 0M7 13.5V17M4 17h6" /></Svg>
          </TraySlot>
          <TraySlot>
            <Svg w={18} h={14} color="#222"><path d="M4 3h13v9H4zM1 1v3M3 1v3M2 4v3l2 1" /><rect x="5.5" y="5" width="5" height="5" fill="#222" /></Svg>
          </TraySlot>
          <TraySlot>
            <Svg w={16} h={14} color="#222"><path d="M1 5v4h2l4 3.5v-10L3 5zM10 5l4 4M14 5l-4 4" /></Svg>
          </TraySlot>
          <TraySlot><ImeText>中</ImeText></TraySlot>
          <TraySlot $gap={4}><SogouS>S</SogouS></TraySlot>
          <Clock>15:02<br />2024-04-23</Clock>
          <NotifySlot>
            <svg width="16" height="14" viewBox="0 0 16 14"><path d="M0 0h16v11H5l-2 3v-3H0z" fill="#111" /></svg>
            <NotifyBadge>13</NotifyBadge>
          </NotifySlot>
        </TrayArea>
      </Taskbar>

      <Dialog>
        <DlgTitle>
          生产经营模板设置
          <DlgControls>
            <DlgControl><Minus size={14} strokeWidth={1} /></DlgControl>
            <DlgControl><Svg w={12} h={12}><path d="M1.5 1.5h9v9h-9z" /></Svg></DlgControl>
            <DlgControl><X size={16} strokeWidth={1} /></DlgControl>
          </DlgControls>
        </DlgTitle>
        <DlgBody>
          <FormRow $h={36}>
            <FieldLabel $dy={1}>模板名称</FieldLabel>
            <TextBox $w={163}>生产经营模板1</TextBox>
          </FormRow>
          <FormRow $h={32}>
            <FieldLabel $dy={-2}>起始行</FieldLabel>
            <SpinBox>
              2
              <SpinBtns>
                <svg width="7" height="5" viewBox="0 0 7 5"><path d="M3.5 0L7 5H0z" fill="#333" /></svg>
                <svg width="7" height="5" viewBox="0 0 7 5"><path d="M3.5 5L0 0h7z" fill="#333" /></svg>
              </SpinBtns>
            </SpinBox>
          </FormRow>
          <Columns>
            <ColLeft>
              <FormRow $h={31}>
                <FieldLabel>日期</FieldLabel>
                <Drop>A<DropArrow /></Drop>
                <Check />
                <CheckText>无此列</CheckText>
              </FormRow>
              <FormRow $h={34}>
                <FieldLabel>工业生产电力消费</FieldLabel>
                <Drop>B<DropArrow /></Drop>
              </FormRow>
              <FormRow $h={33}>
                <FieldLabel>投资完成额</FieldLabel>
                <Drop>C<DropArrow /></Drop>
              </FormRow>
              <FormRow $h={34}>
                <FieldLabel>用工人数</FieldLabel>
                <Drop>D<DropArrow /></Drop>
              </FormRow>
            </ColLeft>
            <ColRight>
              <FormRow $h={20}>
                <FieldLabel $w={49}>投资构成</FieldLabel>
                <Drop>E<DropArrow /></Drop>
              </FormRow>
              <OptionStack>
                <TextBox $w={143}>建筑工程</TextBox>
                <TextBox $w={143}>安装工程</TextBox>
                <TextBox $w={143}>设备工器具购置</TextBox>
                <TextBox $w={143}>其它费用</TextBox>
              </OptionStack>
            </ColRight>
          </Columns>
          <DlgButtons>
            <BlueBtn $light>确认</BlueBtn>
            <BlueBtn>取消</BlueBtn>
          </DlgButtons>
          <Grip />
          <MsgBox>
            <MsgClose><X size={16} strokeWidth={1.2} /></MsgClose>
            <MsgText>生产经营模板读取设置更新成功!</MsgText>
            <MsgFoot><MsgOk>确定</MsgOk></MsgFoot>
            <Pointer>
              <svg width="13" height="21" viewBox="0 0 13 21">
                <path d="M1 1v15l3.5-3.5 2.5 6 2.5-1-2.5-6h5z" fill="#fff" stroke="#222" strokeWidth="1" />
              </svg>
            </Pointer>
          </MsgBox>
        </DlgBody>
      </Dialog>
      <Timer>00:29</Timer>
    </Page>
  );
}
